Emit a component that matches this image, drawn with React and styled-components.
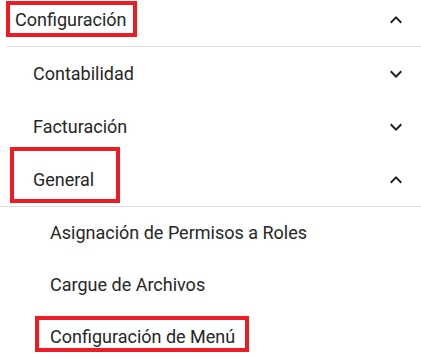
import React from 'react';
import styled, { createGlobalStyle } from 'styled-components';

const GlobalStyle = createGlobalStyle`
	html, body {
		margin: 0;
		padding: 0;
		background: #ffffff;
	}
	body {
		font-family: Roboto, "Noto Sans", Arial, sans-serif;
		color: #262626;
		overflow: hidden;
	}
`;

// whole menu panel
const Menu = styled.nav`
	width: 421px;
	margin-top: -7px;
`;

const Row = styled.div`
	display: flex;
	align-items: center;
	justify-content: space-between;
	height: ${(p) => (p.indent > 40 ? 52 : 53)}px;
	padding-left: ${(p) => p.indent}px;
	padding-right: 13px;
	box-sizing: border-box;
`;

const Divider = styled.div`
	height: 1px;
	background: #e0e0e0;
	margin-left: ${(p) => p.inset || 0}px;
`;

// label text, with an optional red annotation box drawn over it
const Label = styled.span`
	position: relative;
	font-size: 18px;
	line-height: 24px;
	letter-spacing: 0;
	&::after {
		content: '';
		display: ${(p) => (p.box ? 'block' : 'none')};
		position: absolute;
		top: ${(p) => (p.box ? p.box[0] : 0)}px;
		right: ${(p) => (p.box ? p.box[1] : 0)}px;
		bottom: ${(p) => (p.box ? p.box[2] : 0)}px;
		left: ${(p) => (p.box ? p.box[3] : 0)}px;
		border: 4px solid #ed1c24;
		pointer-events: none;
	}
`;

const Icon = styled.svg`
	width: 24px;
	height: 24px;
	fill: #212121;
	flex: none;
`;

function Chevron({ open }) {
	return (
		<Icon viewBox="0 0 24 24">
			{open ? (
				<path d="M12 8l-6 6 1.41 1.41L12 10.83l4.59 4.58L18 14z" />
			) : (
				<path d="M16.59 8.59 12 13.17 7.41 8.59 6 10l6 6 6-6z" />
			)}
		</Icon>
	);
}

function Item({ label, indent, chevron, box }) {
	return (
		<Row indent={indent}>
			<Label box={box}>{label}</Label>
			{chevron && <Chevron open={chevron === 'open'} />}
		</Row>
	);
}

export default function App() {
	return (
		<>
			<GlobalStyle />
			<Menu>
				<Item label="Configuración" indent={15} chevron="open" box={[-7, -11, -5, -9]} />
				<Divider inset={6} />
				<Item label="Contabilidad" indent={33} chevron="closed" />
				<Item label="Facturación" indent={33} chevron="closed" />
				<Item label="General" indent={33} chevron="open" box={[-21, -26, -11, -23]} />
				<Divider />
				<Item label="Asignación de Permisos a Roles" indent={50} />
				<Item label="Cargue de Archivos" indent={50} />
				<Item label="Configuración de Menú" indent={50} box={[-9, -14, -3, -15]} />
			</Menu>
		</>
	);
}
